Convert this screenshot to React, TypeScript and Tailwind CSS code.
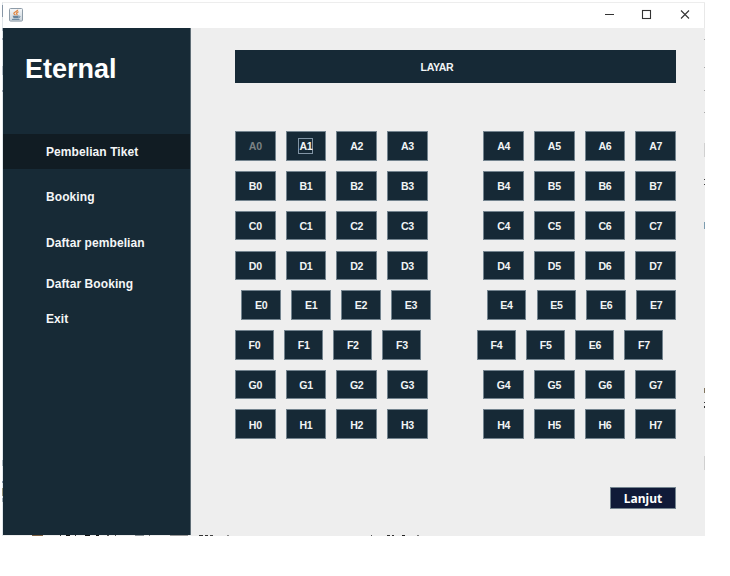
type Seat = { label: string; disabled?: boolean; focused?: boolean };
type Row = { left: string[]; right: string[]; kind: "wide" | "mid" | "narrow" };

const rows: Row[] = [
  { left: ["A0", "A1", "A2", "A3"], right: ["A4", "A5", "A6", "A7"], kind: "wide" },
  { left: ["B0", "B1", "B2", "B3"], right: ["B4", "B5", "B6", "B7"], kind: "wide" },
  { left: ["C0", "C1", "C2", "C3"], right: ["C4", "C5", "C6", "C7"], kind: "wide" },
  { left: ["D0", "D1", "D2", "D3"], right: ["D4", "D5", "D6", "D7"], kind: "wide" },
  { left: ["E0", "E1", "E2", "E3"], right: ["E4", "E5", "E6", "E7"], kind: "mid" },
  { left: ["F0", "F1", "F2", "F3"], right: ["F4", "F5", "E6", "F7"], kind: "narrow" },
  { left: ["G0", "G1", "G2", "G3"], right: ["G4", "G5", "G6", "G7"], kind: "wide" },
  { left: ["H0", "H1", "H2", "H3"], right: ["H4", "H5", "H6", "H7"], kind: "wide" },
];

const rowClass = {
  wide: "pr-0",
  mid: "pl-[6.4px]",
  narrow: "pr-[12.5px]",
};
const groupClass = {
  wide: "w-[192.7px]",
  mid: "w-[189.3px]",
  narrow: "w-[186.5px]",
};
const seatClass = {
  wide: "w-[40.6px]",
  mid: "w-[39.6px]",
  narrow: "w-[39px]",
};

function SeatButton({ label, disabled, focused, kind }: Seat & { kind: Row["kind"] }) {
  return (
    <button
      className={`flex h-[29.6px] items-center justify-center border border-[#74848f] bg-[#162936] text-[10.6px] leading-none font-bold tracking-[-0.3px] ${seatClass[kind]} ${disabled ? "text-[#7b8285]" : "text-[#f1f4f5]"}`}
    >
      <span
        className={
          focused
            ? "flex h-[16px] w-[15px] items-center justify-center border border-[#8295a5] pt-px"
            : "pt-[1.4px]"
        }
      >
        {label}
      </span>
    </button>
  );
}

function SeatGroup({ seats, kind }: { seats: string[]; kind: Row["kind"] }) {
  return (
    <div className={`flex justify-between ${groupClass[kind]}`}>
      {seats.map((s) => (
        <SeatButton key={s} label={s} kind={kind} disabled={s === "A0"} focused={s === "A1"} />
      ))}
    </div>
  );
}

function JavaIcon() {
  return (
    <svg width="14" height="14" viewBox="0 0 14 14" fill="none">
      <defs>
        <linearGradient id="tile" x1="0" y1="0" x2="0" y2="1">
          <stop offset="0" stopColor="#f6f8fa" />
          <stop offset="1" stopColor="#c9d2da" />
        </linearGradient>
      </defs>
      <rect x=".5" y=".5" width="13" height="12.6" rx="1" fill="url(#tile)" stroke="#8e9ca8" />
      <path d="M8.8 1.8C8.6 3.4 4.4 4.2 4.8 5.6c.2.7 1.2.8 1.7 1.5M9.6 3.8c-2 .7-2.5 1.3-1.7 2.2.4.5.1.9-.3 1.2" stroke="#e0823c" strokeWidth="1.2" />
      <path d="M3.6 7.7h6l-.5 2.6H4.6z" fill="#66839c" />
      <path d="M9.4 8c2-.4 2.2 1.6-.2 1.9M3 11.4h7.5" stroke="#66839c" strokeWidth="1" />
    </svg>
  );
}

const sideMarks = [
  "left-[2px] top-[5px] h-[12px] w-px bg-[#8796a6]",
  "left-[2px] top-[28px] h-[3px] w-px bg-[#a5b0bb]",
  "left-[2px] top-[38px] h-[2px] w-px bg-[#9ba7b3]",
  "left-[2px] top-[66px] h-[9px] w-px bg-[#b5bfc9]",
  "left-[2px] top-[90px] h-[2px] w-px bg-[#9ba7b3]",
  "left-[2px] top-[460px] h-[6px] w-px bg-[#a9b5bd]",
  "left-[2px] top-[481px] h-[2px] w-px bg-[#8796a6]",
  "left-[2px] top-[488px] h-[8px] w-px bg-[#94927a]",
  "left-[2px] top-[498px] h-[4px] w-px bg-[#9aa8b0]",
  "left-[704px] top-[39px] h-px w-px bg-[#a8a8a8]",
  "left-[704px] top-[67px] h-px w-px bg-[#a8a8a8]",
  "left-[704px] top-[90px] h-px w-px bg-[#a8a8a8]",
  "left-[704px] top-[112px] h-px w-px bg-[#a8a8a8]",
  "left-[704px] top-[143px] h-[14px] w-px bg-[#d0d0d0]",
  "left-[704px] top-[179px] h-px w-px bg-[#444]",
  "left-[704px] top-[184px] h-px w-px bg-[#444]",
  "left-[704px] top-[222px] h-[7px] w-px bg-[#7c9caf]",
  "left-[704px] top-[388px] h-[5px] w-px bg-[#81755f]",
  "left-[704px] top-[402px] h-px w-px bg-[#333]",
  "left-[704px] top-[406px] h-[2px] w-px bg-[#333]",
  "left-[704px] top-[456px] h-[14px] w-px bg-[#d0d0d0]",
  "left-[32px] top-[535px] h-px w-[11px] bg-[#7d6042]",
  "left-[60px] top-[535px] h-px w-px bg-[#333]",
  "left-[66px] top-[535px] h-px w-[4px] bg-[#111]",
  "left-[75px] top-[535px] h-px w-px bg-[#333]",
  "left-[85px] top-[535px] h-px w-[5px] bg-[#111]",
  "left-[96px] top-[535px] h-px w-[3px] bg-[#111]",
  "left-[107px] top-[535px] h-px w-[2px] bg-[#555]",
  "left-[115px] top-[535px] h-px w-px bg-[#555]",
  "left-[135px] top-[535px] h-px w-[9px] bg-[#8b9296]",
  "left-[149px] top-[535px] h-px w-px bg-[#777]",
  "left-[170px] top-[535px] h-px w-[18px] bg-[#999]",
  "left-[199px] top-[535px] h-px w-[4px] bg-[#333]",
  "left-[205px] top-[535px] h-px w-[3px] bg-[#333]",
  "left-[210px] top-[535px] h-px w-[3px] bg-[#444]",
  "left-[227px] top-[535px] h-px w-[2px] bg-[#888]",
  "left-[371px] top-[535px] h-px w-px bg-[#555]",
  "left-[387px] top-[535px] h-px w-[3px] bg-[#333]",
  "left-[392px] top-[535px] h-px w-[2px] bg-[#333]",
  "left-[402px] top-[535px] h-px w-[3px] bg-[#222]",
  "left-[417px] top-[535px] h-px w-[2px] bg-[#777]",
];

export default function App() {
  return (
    <div className="relative h-[576px] w-[730px] overflow-hidden bg-white pt-[2px] pl-[2px] font-['Liberation_Sans',Arial,sans-serif]">
      <div className="flex h-[534px] w-[703px] flex-col border-t border-l border-t-[#ededed] border-l-[#dfe5e9]">
        <header className="flex h-[25px] shrink-0 items-center justify-between border-r border-[#e8e8e8] bg-white pr-[14px] pl-[6px]">
          <div className="-mt-px">
            <JavaIcon />
          </div>
          <svg className="-mt-[3px]" width="86" height="12" viewBox="0 0 86 12" fill="none" stroke="#333">
            <path d="M1 6.5h9" />
            <rect x="38.5" y="2.5" width="8" height="8" strokeWidth="1.1" />
            <path d="M77 2.5l8 8M85 2.5l-8 8" strokeWidth="1.1" />
          </svg>
        </header>
        <div className="flex min-h-0 flex-1 bg-[#eeeeee]">
          <aside className="mb-px flex w-[188px] shrink-0 flex-col border-r border-[#5f6d76] bg-[#172a36] text-[#f4f6f7]">
            <h1 className="h-[106px] pt-[26px] pl-[22px] text-[27px] leading-[31px] font-bold text-white">
              Eternal
            </h1>
            <nav className="flex flex-col text-[12px] leading-[14px] font-bold tracking-[0.08px]">
              <a className="flex h-[35px] items-center bg-[#111c23] pt-px pl-[43px]">Pembelian Tiket</a>
              <a className="mt-[21px] pl-[43px]">Booking</a>
              <a className="mt-[32px] pl-[43px]">Daftar pembelian</a>
              <a className="mt-[27px] pl-[43px]">Daftar Booking</a>
              <a className="mt-[21px] pl-[43px]">Exit</a>
            </nav>
          </aside>
          <main className="flex flex-1 flex-col pt-[22px] pr-[29px] pl-[44px]">
            <div className="flex h-[33px] shrink-0 items-center justify-center bg-[#162936] pt-[2px] pr-[37px] text-[10.6px] leading-none font-bold tracking-[-0.35px] text-[#f1f4f5]">
              LAYAR
            </div>
            <div className="mt-[48.3px] flex flex-col gap-[10.15px]">
              {rows.map((row) => (
                <div key={row.left[0]} className={`flex justify-between ${rowClass[row.kind]}`}>
                  <SeatGroup seats={row.left} kind={row.kind} />
                  <SeatGroup seats={row.right} kind={row.kind} />
                </div>
              ))}
            </div>
            <button className="mt-[48px] flex h-[22px] w-[66px] shrink-0 items-center justify-center self-end border border-[#74848f] bg-[#101a38] pt-px font-['Noto_Sans','Open_Sans',sans-serif] text-[12px] leading-none font-bold text-white">
              Lanjut
            </button>
          </main>
        </div>
      </div>
      {sideMarks.map((mark) => (
        <i key={mark} className={`absolute ${mark}`} />
      ))}
    </div>
  );
}
